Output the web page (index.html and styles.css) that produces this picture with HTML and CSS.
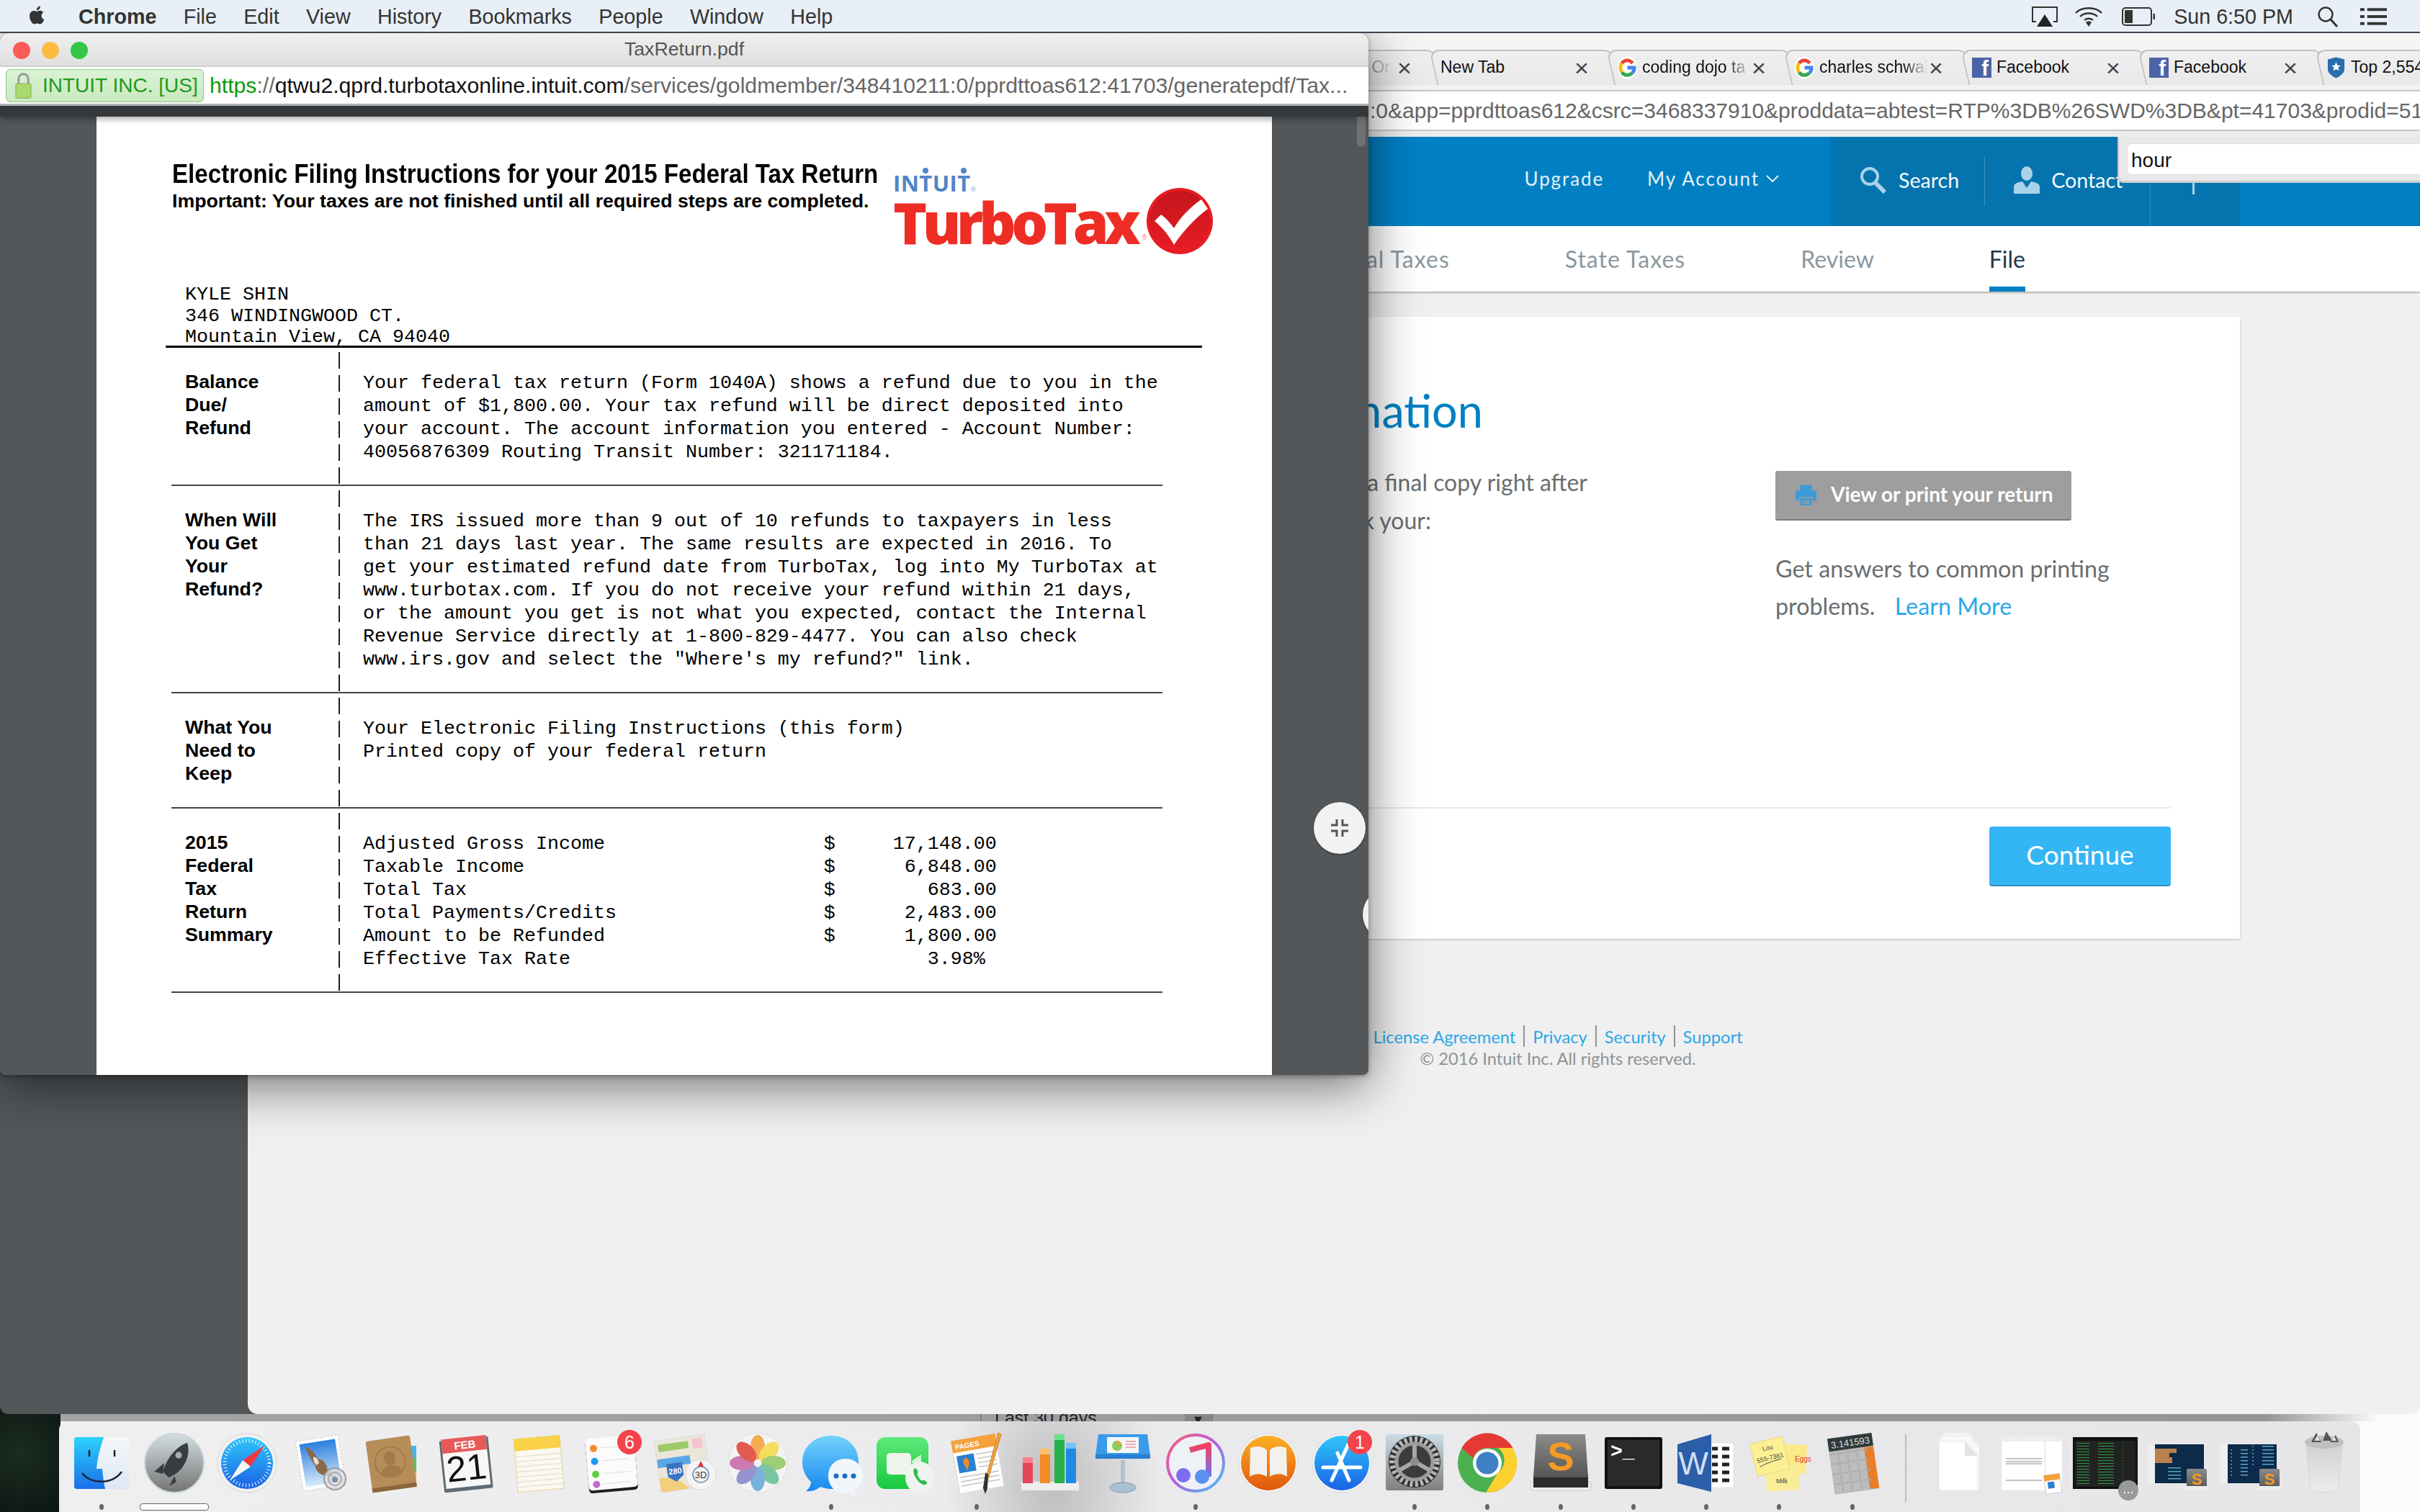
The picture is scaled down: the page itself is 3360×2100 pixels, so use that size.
FILE: index.html
```html
<!DOCTYPE html>
<html lang="en">
<head>
<meta charset="utf-8">
<title>TaxReturn.pdf</title>
<link rel="stylesheet" href="styles.css">
</head>
<body>
<svg class="defs" aria-hidden="true"><defs>
<linearGradient id="gBlue" x1="0" y1="0" x2="0" y2="1"><stop offset="0" stop-color="#2bd3fb"/><stop offset="1" stop-color="#1a6fe8"/></linearGradient>
<linearGradient id="gLight" x1="0" y1="0" x2="0" y2="1"><stop offset="0" stop-color="#f6f7fa"/><stop offset="1" stop-color="#dce8f4"/></linearGradient>
<linearGradient id="gGrey" x1="0" y1="0" x2="0" y2="1"><stop offset="0" stop-color="#d4dfe2"/><stop offset="1" stop-color="#747474"/></linearGradient>
<linearGradient id="gSky" x1="0" y1="0" x2="0" y2="1"><stop offset="0" stop-color="#2c7fe0"/><stop offset="1" stop-color="#d6eaf8"/></linearGradient>
<linearGradient id="gGreen" x1="0" y1="0" x2="0" y2="1"><stop offset="0" stop-color="#5fe87a"/><stop offset="1" stop-color="#17c93f"/></linearGradient>
<linearGradient id="gMsg" x1="0" y1="0" x2="0" y2="1"><stop offset="0" stop-color="#72d2fb"/><stop offset="1" stop-color="#1788f0"/></linearGradient>
<linearGradient id="gTunes" x1="0" y1="0" x2="1" y2="1"><stop offset="0" stop-color="#fb5c74"/><stop offset=".5" stop-color="#b65ee0"/><stop offset="1" stop-color="#3dc8f5"/></linearGradient>
<linearGradient id="gNote" x1="0" y1="0" x2="0" y2="1"><stop offset="0" stop-color="#f6405f"/><stop offset="1" stop-color="#6f77f2"/></linearGradient>
<linearGradient id="gBooks" x1="0" y1="0" x2="0" y2="1"><stop offset="0" stop-color="#fdb022"/><stop offset="1" stop-color="#e0560f"/></linearGradient>
<linearGradient id="gApp" x1="0" y1="0" x2="0" y2="1"><stop offset="0" stop-color="#2fc6fa"/><stop offset="1" stop-color="#1a62e6"/></linearGradient>
<linearGradient id="gSys" x1="0" y1="0" x2="0" y2="1"><stop offset="0" stop-color="#c9dde4"/><stop offset="1" stop-color="#7f7f7f"/></linearGradient>
<linearGradient id="gSub" x1="0" y1="0" x2="0" y2="1"><stop offset="0" stop-color="#8b8b8b"/><stop offset="1" stop-color="#565656"/></linearGradient>
<linearGradient id="gRed" x1="0" y1="0" x2="0" y2="1"><stop offset="0" stop-color="#c4161c"/><stop offset="1" stop-color="#e81c24"/></linearGradient>
<linearGradient id="gTrash" x1="0" y1="0" x2="0" y2="1"><stop offset="0" stop-color="#cfcfcf"/><stop offset="1" stop-color="#ececec"/></linearGradient>
<pattern id="pCode" width="34" height="4" patternUnits="userSpaceOnUse"><rect width="22" height="1" fill="#2e9c40"/></pattern>
<pattern id="pCode2" width="30" height="5" patternUnits="userSpaceOnUse"><rect width="18" height="1.5" fill="#5aa7c7"/></pattern>
<pattern id="pKeys" width="13" height="14" patternUnits="userSpaceOnUse"><rect x=".6" y=".6" width="11.8" height="12.8" rx="1" fill="#bdbdbd" stroke="#9c9c9c" stroke-width=".5"/></pattern>
<pattern id="pKeysO" width="13" height="14" patternUnits="userSpaceOnUse"><rect x=".6" y=".6" width="11.8" height="12.8" rx="1" fill="#ee7d22" stroke="#c9651a" stroke-width=".5"/></pattern>
</defs></svg>

<div class="wallpaper"></div>

<div class="backpane">
  <div class="backband"><div class="select"><span class="select-label">Last 30 days</span><span class="select-arrow">▼</span></div></div>
</div>

<header class="menubar">
  <svg class="apple" viewBox="0 0 24 30"><path d="M17.6 15.7c0-3 2.4-4.4 2.6-4.5-1.400-2.100-3.600-2.400-4.400-2.400-1.900-.2-3.600 1.100-4.600 1.100-1 0-2.400-1.100-4-1C5.100 8.900 3.200 10.100 2.100 12c-2.200 3.800-.6 9.400 1.500 12.500 1.100 1.500 2.300 3.200 4 3.100 1.600-.1 2.200-1 4.100-1 1.900 0 2.500 1 4.100 1 1.700 0 2.800-1.500 3.800-3 1.200-1.700 1.700-3.400 1.700-3.500-.1 0-3.700-1.400-3.700-5.400zM14.500 6.500c.9-1 1.500-2.500 1.300-3.900-1.300.1-2.800.9-3.700 1.900-.8.9-1.500 2.400-1.300 3.800 1.400.1 2.800-.7 3.700-1.800z" fill="#333"/></svg>
  <nav class="menu-items">
    <span class="menu-app">Chrome</span><span>File</span><span>Edit</span><span>View</span><span>History</span><span>Bookmarks</span><span>People</span><span>Window</span><span>Help</span>
  </nav>
  <div class="status">
    <svg class="st-air" viewBox="0 0 38 30"><path d="M7 22H2V2h34v20h-5" fill="none" stroke="#333" stroke-width="2"/><path d="M19 12l11 17H8z" fill="#222"/></svg>
    <svg class="st-wifi" viewBox="0 0 42 30"><g fill="none" stroke="#333" stroke-width="2.400"><path d="M3 10C12 1 30 1 39 10"/><path d="M9 15c6-6 18-6 24 0"/><path d="M15 20c3-3 9-3 12 0"/></g><path d="M21 29l-4-6c2-2 6-2 8 0z" fill="#333"/></svg>
    <svg class="st-batt" viewBox="0 0 47 30"><rect x="1" y="3" width="40" height="24" rx="4" fill="none" stroke="#333" stroke-width="2"/><rect x="4" y="6" width="11" height="18" fill="#333"/><rect x="43.500" y="11" width="2.500" height="8" fill="#333"/></svg>
    <span class="clock">Sun 6:50 PM</span>
    <svg class="st-search" viewBox="0 0 30 30"><circle cx="12" cy="12" r="9.500" fill="none" stroke="#333" stroke-width="2.400"/><path d="M19 19l9 10" stroke="#333" stroke-width="3"/></svg>
    <svg class="st-list" viewBox="0 0 38 30"><g fill="#333"><rect x="0" y="3" width="6" height="4"/><rect x="10" y="3" width="28" height="4"/><rect x="0" y="13" width="6" height="4"/><rect x="10" y="13" width="28" height="4"/><rect x="0" y="23" width="6" height="4"/><rect x="10" y="23" width="28" height="4"/></g></svg>
  </div>
</header>

<div class="darkwin"></div>

<main class="browser">
  <div class="tabstrip">
    <div class="tab"><span class="tab-title fade tab-end">Or</span><span class="tab-x">×</span></div>
    <div class="tab"><span class="tab-title">New Tab</span><span class="tab-x">×</span></div>
    <div class="tab"><svg class="fav" viewBox="0 0 28 32"><ellipse cx="14" cy="16" rx="14" ry="16" fill="#fff"/><g fill="none" stroke-width="5"><path d="M21.500 9.500A10 11 0 0 0 6 9.500" stroke="#ea4335"/><path d="M6 9.500a10 11 0 0 0 0 13" stroke="#fbbc05"/><path d="M6 22.500a10 11 0 0 0 15 1" stroke="#34a853"/><path d="M14 16h10c0 3-1 6-3 7.500" stroke="#4285f4"/></g></svg><span class="tab-title fade">coding dojo ta</span><span class="tab-x">×</span></div>
    <div class="tab"><svg class="fav" viewBox="0 0 28 32"><ellipse cx="14" cy="16" rx="14" ry="16" fill="#fff"/><g fill="none" stroke-width="5"><path d="M21.500 9.500A10 11 0 0 0 6 9.500" stroke="#ea4335"/><path d="M6 9.500a10 11 0 0 0 0 13" stroke="#fbbc05"/><path d="M6 22.500a10 11 0 0 0 15 1" stroke="#34a853"/><path d="M14 16h10c0 3-1 6-3 7.500" stroke="#4285f4"/></g></svg><span class="tab-title fade">charles schwab</span><span class="tab-x">×</span></div>
    <div class="tab"><span class="fb">f</span><span class="tab-title">Facebook</span><span class="tab-x">×</span></div>
    <div class="tab"><span class="fb">f</span><span class="tab-title">Facebook</span><span class="tab-x">×</span></div>
    <div class="tab"><svg class="fav" viewBox="0 0 28 32"><path d="M14 1l12 3v14c0 6-6 10-12 13C8 28 2 24 2 18V4z" fill="#2a6db0"/><path d="M14 8l2 4.500 4.500.3-3.500 3 1.200 4.700L14 18l-4.200 2.500 1.200-4.700-3.500-3 4.500-.3z" fill="#fff"/></svg><span class="tab-title">Top 2,554 Compani</span></div>
  </div>
  <div class="addr"><span class="addr-text">:0&amp;app=pprdttoas612&amp;csrc=3468337910&amp;proddata=abtest=RTP%3DB%26SWD%3DB&amp;pt=41703&amp;prodid=51</span></div>
  <div class="page">
    <div class="findbar"><div class="findinput">hour</div></div>
    <div class="topbar">
      <span class="top-link top-up">Upgrade</span>
      <span class="top-link top-up">My Account<svg class="chev" viewBox="0 0 20 12"><path d="M2 2l8 8 8-8" fill="none" stroke="#dbeef8" stroke-width="2"/></svg></span>
      <div class="top-dark">
        <span class="top-tool"><svg class="ic-search" viewBox="0 0 38 38"><circle cx="14" cy="14" r="11" fill="none" stroke="#a9d3e8" stroke-width="4"/><path d="M22 23l13 13" stroke="#a9d3e8" stroke-width="6"/></svg>Search</span>
        <span class="top-tool top-contact"><svg class="ic-user" viewBox="0 0 36 38"><ellipse cx="18" cy="10" rx="8" ry="10" fill="#a9d3e8"/><path d="M0 38V28c0-4 6-6 12-7l6 9 6-9c6 1 12 3 12 7v10z" fill="#a9d3e8"/></svg>Contact</span>
        <span class="top-last"><i class="top-pin"></i></span>
      </div>
    </div>
    <nav class="subnav">
      <span class="sub-wide">Federal Taxes</span><span class="sub-wide">State Taxes</span><span>Review</span><span class="sub-on">File</span>
    </nav>
    <div class="content">
      <section class="card">
        <h1 class="card-title">Information</h1>
        <div class="card-cols">
          <div class="card-left">
            <p>Print a final copy right after</p>
            <p class="short">check your:</p>
          </div>
          <div class="card-right">
            <div class="print-btn"><svg class="ic-print" viewBox="0 0 32 32"><path d="M8 1h16v8H8z" fill="#3a9bd8"/><rect x="1" y="9" width="30" height="15" rx="3" fill="#3a9bd8"/><path d="M7 19h18v12H7z" fill="#3a9bd8" stroke="#9e9e9e" stroke-width="1.500"/><path d="M10 24h12M10 27h12" stroke="#9e9e9e" stroke-width="1.500"/></svg><span class="print-label">View or print your return</span></div>
            <p class="help">Get answers to common printing<br>problems. <a class="learn">Learn More</a></p>
          </div>
        </div>
        <div class="card-foot"><div class="continue">Continue</div></div>
      </section>
      <footer class="legal">
        <div class="legal-links"><a>License Agreement</a><a>Privacy</a><a>Security</a><a>Support</a></div>
        <div class="legal-copy">© 2016 Intuit Inc. All rights reserved.</div>
      </footer>
    </div>
  </div>
</main>

<section class="popup">
  <div class="pop-title">
    <span class="lights"><i class="l-r"></i><i class="l-y"></i><i class="l-g"></i></span>
    <span class="pop-name">TaxReturn.pdf</span>
  </div>
  <div class="pop-url">
    <span class="ev"><svg class="lock" viewBox="0 0 24 38"><path d="M5 17V9a7 7 0 0 1 14 0v8" fill="none" stroke="#999" stroke-width="3"/><rect x="1" y="16" width="22" height="21" rx="1.500" fill="#a9d86f" stroke="#7fa85a"/></svg>INTUIT INC. [US]</span>
    <span class="url"><b class="u-g">https</b><b class="u-s">://</b><b class="u-k">qtwu2.qprd.turbotaxonline.intuit.com</b><b class="u-s">/services/goldmember/348410211:0/pprdttoas612:41703/generatepdf/Tax...</b></span>
  </div>
  <div class="pop-strip"></div>
  <div class="viewer">
    <div class="thumb"></div>
    <button class="fab fab-main" aria-label="Exit full screen"><svg viewBox="0 0 28 28"><path d="M10 2v8H2M18 2v8h8M10 26v-8H2M18 26v-8h8" fill="none" stroke="#555" stroke-width="3"/></svg></button>
    <button class="fab fab-cut" aria-label="Zoom"></button>
    <article class="sheet">
      <div class="sheet-head">
        <div class="sheet-titles">
          <h2 class="doc-title">Electronic Filing Instructions for your 2015 Federal Tax Return</h2>
          <p class="doc-sub">Important: Your taxes are not finished until all required steps are completed.</p>
        </div>
        <div class="logo">
          <div class="intuit">IN<span class="dot">T</span>UI<span class="dot">T</span><sup>®</sup></div>
          <div class="tt-row">
            <span class="turbotax">TurboTax</span><span class="tt-r">®</span>
            <svg class="tt-check" viewBox="0 0 92 92"><circle cx="46" cy="46" r="46" fill="#e81c24"/><circle cx="46" cy="46" r="42" fill="url(#gRed)"/><path d="M11 46l9-9c7 5 13 12 18 19C46 42 59 28 76 16l9 13C68 42 52 58 38 79 31 66 22 55 11 46z" fill="#fff"/></svg>
          </div>
        </div>
      </div>
      <pre class="address">KYLE SHIN
346 WINDINGWOOD CT.
Mountain View, CA 94040</pre>
      <div class="rule-top"></div>
      <div class="drow">
        <div class="dlabel">Balance<br>Due/<br>Refund</div><i class="dbar"></i>
        <pre class="dtext">Your federal tax return (Form 1040A) shows a refund due to you in the
amount of $1,800.00. Your tax refund will be direct deposited into
your account. The account information you entered - Account Number:
40056876309 Routing Transit Number: 321171184.</pre>
      </div>
      <div class="drow">
        <div class="dlabel">When Will<br>You Get<br>Your<br>Refund?</div><i class="dbar"></i>
        <pre class="dtext">The IRS issued more than 9 out of 10 refunds to taxpayers in less
than 21 days last year. The same results are expected in 2016. To
get your estimated refund date from TurboTax, log into My TurboTax at
www.turbotax.com. If you do not receive your refund within 21 days,
or the amount you get is not what you expected, contact the Internal
Revenue Service directly at 1-800-829-4477. You can also check
www.irs.gov and select the "Where's my refund?" link.</pre>
      </div>
      <div class="drow">
        <div class="dlabel">What You<br>Need to<br>Keep</div><i class="dbar"></i>
        <pre class="dtext">Your Electronic Filing Instructions (this form)
Printed copy of your federal return</pre>
      </div>
      <div class="drow">
        <div class="dlabel">2015<br>Federal<br>Tax<br>Return<br>Summary</div><i class="dbar"></i>
        <pre class="dtext">Adjusted Gross Income                   $     17,148.00
Taxable Income                          $      6,848.00
Total Tax                               $        683.00
Total Payments/Credits                  $      2,483.00
Amount to be Refunded                   $      1,800.00
Effective Tax Rate                               3.98%</pre>
      </div>
    </article>
  </div>
</section>

<footer class="dock">
  <div class="dk on"><svg viewBox="0 0 88 88"><rect x="6" y="8" width="76" height="72" rx="4" fill="url(#gLight)"/><path d="M10 8h37c-5 15-9 30-10 44h8c1 10 2 20 4 28H10a4 4 0 0 1-4-4V12a4 4 0 0 1 4-4z" fill="url(#gBlue)"/><path d="M27 26v9M62 26v9" stroke="#222" stroke-width="2.500"/><path d="M17 58c12 16 42 16 55-2" fill="none" stroke="#223" stroke-width="2.500"/></svg></div>
  <div class="dk bar"><svg viewBox="0 0 88 88"><circle cx="44" cy="44" r="41" fill="url(#gGrey)" stroke="#c9d5d8" stroke-width="2"/><path d="M62 16C48 20 34 36 28 56l8 8C56 58 68 34 62 16zM30 44L16 56l12 3zM44 62l-7 14 10-6z" fill="#3a3d40"/><circle cx="50" cy="33" r="4.500" fill="#a8aeb0"/></svg></div>
  <div class="dk"><svg viewBox="0 0 88 88"><circle cx="44" cy="44" r="41" fill="#f1f1f1" stroke="#d5d5d5"/><circle cx="44" cy="44" r="36" fill="url(#gApp)"/><circle cx="44" cy="44" r="31" fill="none" stroke="#fff" stroke-width="5" stroke-dasharray="1 3.500"/><path d="M68 20L38 40l11 9z" fill="#f0383c"/><path d="M20 68l18-28 11 9z" fill="#f6f6f6"/></svg></div>
  <div class="dk"><svg viewBox="0 0 88 88"><g transform="rotate(-9 44 44)"><rect x="14" y="9" width="60" height="70" fill="#fff" stroke="#ddd" stroke-width="2" stroke-dasharray="3 2"/><rect x="19" y="14" width="50" height="60" fill="url(#gSky)"/><path d="M26 18c7 3 12 10 16 20 7 1 10 8 10 16l10 14-14-6c-8-2-12-8-12-16-4-8-8-18-10-28z" fill="#8a6a4a"/><path d="M36 34c4 1 6 6 6 10l-4 2c-3-4-4-8-2-12z" fill="#e9dfd0"/></g><circle cx="64" cy="66" r="15" fill="rgba(220,220,225,.8)" stroke="#999" stroke-width="2"/><circle cx="64" cy="66" r="9" fill="none" stroke="#aaa" stroke-width="2"/><circle cx="64" cy="67" r="4" fill="#7f8fa5"/></svg></div>
  <div class="dk"><svg viewBox="0 0 88 88"><rect x="66" y="20" width="10" height="18" fill="#49b6e6"/><rect x="66" y="38" width="10" height="18" fill="#5fc15a"/><rect x="66" y="56" width="10" height="18" fill="#f2b632"/><g transform="rotate(-8 44 44)"><rect x="10" y="9" width="62" height="72" rx="3" fill="#b68d58"/><rect x="10" y="75" width="62" height="6" fill="#8a663a"/><circle cx="40" cy="42" r="21" fill="none" stroke="#a17a49" stroke-width="2"/><ellipse cx="40" cy="37" rx="8" ry="10" fill="#a17a49"/><path d="M25 58c2-9 9-11 15-11s13 2 15 11c-8 5-22 5-30 0z" fill="#a17a49"/></g></svg></div>
  <div class="dk"><svg viewBox="0 0 88 88"><g transform="rotate(-6 44 44)"><rect x="10" y="10" width="68" height="72" rx="2" fill="#5d6d75"/><rect x="13" y="10" width="62" height="67" fill="#f7f7f7"/><rect x="13" y="8" width="62" height="20" fill="#e85a5a"/><text x="30" y="24" class="cal-m">FEB</text><text x="44" y="68" class="cal-d">21</text></g></svg></div>
  <div class="dk"><svg viewBox="0 0 88 88"><g transform="rotate(-5 44 44)"><rect x="12" y="8" width="64" height="74" fill="#fbf9ef" stroke="#e2d39a"/><rect x="12" y="8" width="64" height="17" fill="#f9d24a"/><path d="M12 33h64M12 40h64M12 47h64M12 54h64M12 61h64M12 68h64M12 75h64" stroke="#dcdacb" stroke-width="1"/></g></svg></div>
  <div class="dk"><svg viewBox="0 0 88 88"><g transform="rotate(-5 40 46)"><rect x="9" y="10" width="68" height="74" rx="5" fill="#1d1d1d"/><rect x="9" y="8" width="68" height="72" rx="5" fill="#fbfbfb"/><circle cx="20" cy="22" r="5" fill="#f58a2a"/><circle cx="20" cy="40" r="5" fill="#1e9bf0"/><circle cx="20" cy="58" r="5" fill="#5ad23c"/><circle cx="20" cy="72" r="5" fill="#c46ad6"/><path d="M30 22h38M30 40h38M30 58h38M30 72h38" stroke="#e4e4e4" stroke-width="1.500"/></g><circle cx="68" cy="15" r="17" fill="#f4434a"/><text x="68" y="24" class="badge">6</text></svg></div>
  <div class="dk"><svg viewBox="0 0 88 88"><g transform="rotate(-8 44 44)"><rect x="6" y="8" width="70" height="72" fill="#ece6d8" stroke="#ddd"/><rect x="10" y="14" width="42" height="10" fill="#9cc96a"/><rect x="58" y="12" width="14" height="14" fill="#f4c6cf"/><path d="M6 34h46v12H6z" fill="#5aa7e6"/><path d="M6 80V60c20 0 30 8 40 20z" fill="#f3cf7c"/><path d="M18 42h22v18l-11 8-11-8z" fill="#3b73c4"/><text x="29" y="57" class="mapnum">280</text></g><circle cx="66" cy="60" r="21" fill="#f4f4f4" stroke="#ddd"/><circle cx="66" cy="60" r="11" fill="none" stroke="#6a8fb3" stroke-width="1.500"/><path d="M66 41l-4 8h8z" fill="#e33"/><text x="66" y="65" class="map3d">3D</text></svg></div>
  <div class="dk"><svg viewBox="0 0 88 88"><circle cx="44" cy="44" r="41" fill="#f4f4f4" stroke="#ddd"/><g opacity=".88"><ellipse cx="44" cy="22" rx="10" ry="17" fill="#f4a13c"/><ellipse cx="44" cy="22" rx="10" ry="17" fill="#f5d94a" transform="rotate(45 44 44)"/><ellipse cx="44" cy="22" rx="10" ry="17" fill="#8fc965" transform="rotate(90 44 44)"/><ellipse cx="44" cy="22" rx="10" ry="17" fill="#6cbf98" transform="rotate(135 44 44)"/><ellipse cx="44" cy="22" rx="10" ry="17" fill="#6aa9d8" transform="rotate(180 44 44)"/><ellipse cx="44" cy="22" rx="10" ry="17" fill="#8a86c8" transform="rotate(225 44 44)"/><ellipse cx="44" cy="22" rx="10" ry="17" fill="#c76aa8" transform="rotate(270 44 44)"/><ellipse cx="44" cy="22" rx="10" ry="17" fill="#e0463a" transform="rotate(315 44 44)"/></g></svg></div>
  <div class="dk on"><svg viewBox="0 0 88 88"><path d="M44 6c22 0 38 15 38 36S66 80 44 80c-5 0-10-1-15-3-5 4-12 7-20 6 4-3 7-8 7-13C8 63 4 53 4 42 4 21 22 6 44 6z" fill="url(#gMsg)"/><path d="M64 38c14 0 24 10 24 24 0 9-5 16-11 20 0 3 1 5 3 7-5 0-9-2-11-4-2 0-3 1-5 1-14 0-24-10-24-24s10-24 24-24z" fill="#f2f6fa"/><circle cx="51" cy="62" r="3.500" fill="#1c6fc4"/><circle cx="63" cy="62" r="3.500" fill="#1c6fc4"/><circle cx="75" cy="62" r="3.500" fill="#1c6fc4"/></svg></div>
  <div class="dk"><svg viewBox="0 0 88 88"><rect x="6" y="8" width="72" height="72" rx="12" fill="url(#gGreen)"/><rect x="20" y="30" width="34" height="30" rx="5" fill="#eef5ec"/><path d="M54 42l14-10v24z" fill="#d5f5d8"/><ellipse cx="66" cy="64" rx="20" ry="22" fill="#f0f4ee"/><path d="M58 52c2-2 4 0 5 3s-1 4 0 6 3 6 5 7 3-1 6 1 2 4 0 5c-6 3-20-14-16-22z" fill="#2dbb4a"/></svg></div>
  <div class="dk on"><svg viewBox="0 0 88 88"><g transform="rotate(-10 44 44)"><rect x="14" y="8" width="62" height="74" fill="#fdfdfd" stroke="#ddd"/><rect x="14" y="8" width="62" height="17" fill="#f5a23a"/><text x="18" y="21" class="pages">PAGES</text><rect x="18" y="30" width="24" height="24" fill="#2b7fd0"/><path d="M30 34c4 2 5 7 3 10l-3 8-3-8c-2-4-1-8 3-10z" fill="#f08a2a"/><path d="M46 32h26M46 38h26M46 44h26M46 50h26M18 60h54M18 66h54M18 72h54" stroke="#aaa" stroke-width="1"/></g><path d="M74 2l4 2-22 76-3-1z" fill="#f4a13c" stroke="#c97f20"/><path d="M56 58l-3 21 3 8 3-8 1-20z" fill="#333"/></svg></div>
  <div class="dk"><svg viewBox="0 0 88 88"><rect x="4" y="70" width="80" height="12" fill="#eee" stroke="#ddd"/><rect x="6" y="40" width="14" height="32" fill="#e5445a"/><rect x="6" y="36" width="14" height="8" fill="#f7838f"/><rect x="30" y="28" width="14" height="44" fill="#f28c28"/><rect x="30" y="24" width="14" height="8" fill="#f8c070"/><rect x="50" y="8" width="14" height="64" fill="#27b14a"/><rect x="50" y="4" width="14" height="8" fill="#6be08a"/><rect x="66" y="20" width="14" height="52" fill="#1f8ae6"/><rect x="66" y="16" width="14" height="8" fill="#74c1f5"/></svg></div>
  <div class="dk"><svg viewBox="0 0 88 88"><rect x="41" y="40" width="6" height="36" fill="#b4c2cc"/><ellipse cx="44" cy="78" rx="18" ry="7" fill="#a9c0d2" stroke="#7d98ad"/><path d="M10 4h68l4 30H6z" fill="#3a9bea"/><rect x="6" y="32" width="76" height="6" fill="#2a7fd0"/><rect x="22" y="8" width="44" height="22" fill="#f6f6f6"/><circle cx="36" cy="20" r="7" fill="#8dcb5a"/><path d="M36 20V13a7 7 0 0 1 6 4z" fill="#f5a13c"/><path d="M48 14h14M48 18h14M48 22h14" stroke="#d66" stroke-width="1.200"/></svg></div>
  <div class="dk on"><svg viewBox="0 0 88 88"><circle cx="44" cy="44" r="39" fill="#eef1f6" stroke="url(#gTunes)" stroke-width="4"/><path d="M36 26l26-7v44" fill="none" stroke="url(#gNote)" stroke-width="8" stroke-linejoin="round"/><path d="M36 24v36" stroke="url(#gNote)" stroke-width="6"/><ellipse cx="27" cy="61" rx="10" ry="10" fill="#7c6df0"/><ellipse cx="53" cy="63" rx="10" ry="10" fill="#5b8ff0"/></svg></div>
  <div class="dk"><svg viewBox="0 0 88 88"><circle cx="44" cy="44" r="41" fill="#f2f2f2" stroke="#ddd"/><circle cx="44" cy="44" r="38" fill="url(#gBooks)"/><path d="M42 26c-6-6-16-6-23-3l-1 40c8-6 18-4 24 0zM46 26c6-6 16-6 23-3l1 40c-8-6-18-4-24 0z" fill="#f3f1ee"/></svg></div>
  <div class="dk"><svg viewBox="0 0 88 88"><circle cx="44" cy="44" r="41" fill="#f2f2f2" stroke="#ddd"/><circle cx="44" cy="44" r="38" fill="url(#gApp)"/><path d="M53 18L30 68M38 30l16 38M18 50h52" stroke="#fff" stroke-width="5" stroke-linecap="round"/><circle cx="69" cy="15" r="17" fill="#f4434a"/><text x="69" y="24" class="badge">1</text></svg></div>
  <div class="dk on"><svg viewBox="0 0 88 88"><rect x="4" y="4" width="80" height="78" rx="3" fill="url(#gSys)"/><circle cx="44" cy="42" r="36" fill="#2f2f2f"/><circle cx="44" cy="42" r="31" fill="none" stroke="#b7b7b7" stroke-width="8" stroke-dasharray="4 3.300"/><circle cx="44" cy="42" r="25" fill="#3b3b3b" stroke="#9b9b9b" stroke-width="5"/><path d="M44 42V18M44 42L23 54M44 42l21 12" stroke="#a7a7a7" stroke-width="6"/><circle cx="44" cy="42" r="6" fill="#8e8e8e"/></svg></div>
  <div class="dk on"><svg viewBox="0 0 88 88"><circle cx="44" cy="44" r="41" fill="#4caf50"/><path d="M8.500 23A41 41 0 0 1 79.500 23H44a21 21 0 0 0-20 14z" fill="#e53935"/><path d="M79.500 23A41 41 0 0 1 42 85l17-28a21 21 0 0 0 0-34z" fill="#fcd02f"/><circle cx="44" cy="44" r="20" fill="#fff"/><circle cx="44" cy="44" r="15.500" fill="#3f7fc4"/></svg></div>
  <div class="dk on"><svg viewBox="0 0 88 88"><rect x="2" y="70" width="84" height="12" rx="2" fill="#ededed" stroke="#ccc"/><rect x="6" y="60" width="76" height="18" fill="#2b2b2b"/><path d="M10 4h68l4 60H6z" fill="url(#gSub)"/><text x="44" y="54" class="subl">S</text></svg></div>
  <div class="dk on"><svg viewBox="0 0 88 88"><rect x="4" y="8" width="80" height="72" rx="3" fill="#111"/><rect x="8" y="12" width="72" height="64" fill="#2a2a2a"/><text x="12" y="36" class="term">&gt;_</text></svg></div>
  <div class="dk on"><svg viewBox="0 0 88 88"><rect x="42" y="16" width="40" height="62" fill="#fff" stroke="#e2e2e2"/><path d="M52 24h24M52 35h24M52 46h24M52 57h24M52 68h24" stroke="#222" stroke-width="5" stroke-dasharray="8 6 10"/><path d="M4 18l47-14v80L4 72z" fill="#2b5ea8"/><text x="26" y="60" class="word">W</text></svg></div>
  <div class="dk on"><svg viewBox="0 0 88 88"><rect x="42" y="18" width="40" height="40" fill="#fbe98a" transform="rotate(3 60 38)"/><rect x="26" y="48" width="46" height="34" fill="#f9ee97" transform="rotate(-4 50 66)"/><g transform="rotate(-14 30 34)"><rect x="8" y="12" width="46" height="46" fill="#fdf094" stroke="#e8d97a"/><text x="31" y="26" class="st1">Lou</text><text x="31" y="40" class="st1">555-7361</text><path d="M14 46c10-3 20-4 32-4" stroke="#555" fill="none"/></g><text x="66" y="42" class="st2">Eggs</text><text x="48" y="72" class="st1">Milk</text></svg></div>
  <div class="dk on"><svg viewBox="0 0 88 88"><g transform="rotate(-8 44 44)"><rect x="14" y="6" width="62" height="78" fill="#b8b8b8"/><rect x="14" y="6" width="62" height="18" fill="#2f3a3a"/><text x="72" y="20" class="calc">3.141593</text><rect x="14" y="25" width="49" height="58" fill="url(#pKeys)"/><rect x="63" y="25" width="13" height="58" fill="url(#pKeysO)"/></g></svg></div>
  <i class="dock-sep"></i>
  <div class="dk"><svg viewBox="0 0 88 88"><g transform="translate(10 0)"><path d="M12 2h36l14 18v60H12z" fill="#f2f2f2"/><path d="M8 8h40l14 16v56H8z" fill="#f8f8f8"/><path d="M6 14h36l18 20v48H6z" fill="#fff" stroke="#e6e6e6"/><path d="M42 14v20h18z" fill="#e4e4e4"/></g></svg></div>
  <div class="dk"><svg viewBox="0 0 88 88"><rect x="2" y="8" width="84" height="74" fill="#fff" stroke="#eee"/><rect x="2" y="8" width="84" height="6" fill="#eee"/><path d="M8 38h50M8 42h50M8 45h50M8 68h50" stroke="#888" stroke-width="1"/><rect x="62" y="14" width="1" height="68" fill="#ddd"/><g transform="rotate(-8 72 72)"><rect x="62" y="60" width="22" height="26" fill="#fff" stroke="#ccc"/><rect x="62" y="60" width="22" height="8" fill="#f5a23a"/><rect x="66" y="70" width="9" height="9" fill="#2b7fd0"/></g></svg></div>
  <div class="dk more"><svg viewBox="0 0 88 88"><rect x="-1" y="8" width="90" height="72" fill="#111"/><rect x="2" y="13" width="84" height="64" fill="#222"/><rect x="5" y="16" width="64" height="58" fill="url(#pCode)"/><circle cx="76" cy="82" r="14" fill="#9a9a9a"/><path d="M70 84h2v2h-2zM75 84h2v2h-2zM80 84h2v2h-2z" fill="#fff"/></svg></div>
  <div class="dk"><svg viewBox="0 0 88 88"><rect x="2" y="18" width="78" height="54" fill="#eee"/><rect x="12" y="18" width="68" height="54" fill="#0c2a4a"/><path d="M12 24h30v6H12zM12 30h20v6H12zM12 36h24v8H12z" fill="#b9814e"/><rect x="20" y="50" width="30" height="20" fill="url(#pCode2)"/><rect x="56" y="52" width="28" height="28" rx="2" fill="url(#gSub)"/><rect x="54" y="76" width="32" height="6" fill="#eee"/><text x="70" y="74" class="subl-s">S</text></svg></div>
  <div class="dk"><svg viewBox="0 0 88 88"><rect x="2" y="18" width="78" height="54" fill="#eee"/><rect x="12" y="18" width="68" height="54" fill="#0c2a4a"/><rect x="16" y="24" width="24" height="40" fill="url(#pCode2)"/><rect x="46" y="20" width="30" height="30" fill="url(#pCode2)"/><rect x="56" y="52" width="28" height="28" rx="2" fill="url(#gSub)"/><rect x="54" y="76" width="32" height="6" fill="#eee"/><text x="70" y="74" class="subl-s">S</text></svg></div>
  <div class="dk"><svg viewBox="0 0 88 88"><g transform="translate(6 0)"><path d="M12 14l7 66c9 6 29 6 38 0l7-66z" fill="url(#gTrash)" stroke="#d6d6d6"/><ellipse cx="38" cy="15" rx="27" ry="9" fill="#c0c0c0"/><path d="M20 15l7-13 7 13zM36 13l5-13 8 13zM46 15l8-10 4 10z" fill="#555"/><path d="M24 13l5-8 3 8zM48 13l4-6 3 6z" fill="#e0e0e0"/></g></svg></div>
</footer>
</body>
</html>
```
FILE: styles.css
```css
* { box-sizing: border-box; }
html, body { margin: 0; padding: 0; }
body {
  position: relative;
  width: 3360px;
  height: 2100px;
  overflow: hidden;
  background: #fff;
  font-family: "Liberation Sans", Arial, sans-serif;
}
.defs { position: absolute; width: 0; height: 0; }
i { display: block; font-style: normal; }
p, h1, h2, pre { margin: 0; }

/* Desktop */
.wallpaper {
  position: absolute; left: 0; top: 1900px; width: 90px; height: 200px;
  background: radial-gradient(circle at 30% 60%, #1c2c22, #0b1712 70%);
}
.backpane {
  position: absolute; left: 84px; top: 1900px; width: 3276px; height: 200px;
  background: linear-gradient(90deg, #f4f4f4, #fbfbfb);
}
.backband {
  position: absolute; left: 0; top: 0; width: 3220px; height: 74px;
  background: linear-gradient(90deg, #a4a4a4 0, #949494 95%, rgba(150,150,150,0) 100%);
}
.select {
  position: absolute; left: 1277px; top: 40px; width: 323px; height: 34px;
  display: flex; align-items: center;
  border-left: 2px solid #808080; border-right: 2px solid #808080;
  font-size: 25px; color: #222;
}
.select-label { padding-left: 18px; flex: 1; padding-top: 24px; }
.select-arrow { width: 37px; height: 100%; background: #868686; font-size: 18px; text-align: center; line-height: 64px; }

/* Menu bar */
.menubar {
  position: absolute; left: 0; top: 0; width: 3360px; height: 46px;
  display: flex; align-items: center;
  padding: 2px 46px 0 40px;
  background: linear-gradient(90deg, #e8eff6, #e9eff6);
  border-bottom: 2px solid #3a4650;
  color: #333;
  font-size: 28.700px;
  z-index: 5;
}
.apple { width: 24px; height: 30px; margin-right: 45px; margin-top: -4px; }
.menu-items { display: flex; gap: 37.300px; }
.menu-app { font-weight: bold; }
.status { margin-left: auto; display: flex; align-items: center; }
.status svg { height: 30px; flex: none; }
.st-air { width: 38px; }
.st-wifi { width: 42px; margin-left: 21px; }
.st-batt { width: 47px; margin-left: 25px; }
.clock { margin: 0 33px 0 25px; }
.st-search { width: 30px; }
.st-list { width: 37px; margin-left: 30px; }

/* Dark window behind */
.darkwin {
  position: absolute; left: 0; top: 1400px; width: 500px; height: 564px;
  background: #53575a;
  border-radius: 0 0 12px 12px;
}

/* Main browser */
.browser {
  position: absolute; left: 344px; top: 46px; width: 3016px; height: 1918px;
  display: flex; flex-direction: column;
  background: #f0f0f0;
  border-radius: 0 0 14px 14px;
  overflow: hidden;
}
.tabstrip {
  flex: none; height: 81px;
  display: flex; padding: 23px 0 0 1390px;
  background: linear-gradient(#f6f6f6, #f2f2f2);
  border-bottom: 2px solid #c4c4c4;
}
.tab {
  position: relative; flex: none; width: 246px; height: 49px;
  display: flex; align-items: center;
  padding: 0 18px 0 20px;
  font-size: 23px; color: #111;
  white-space: nowrap;
}
.tab::before {
  content: ""; position: absolute; left: 4px; right: -14px; top: 0; bottom: 0;
  background: linear-gradient(#efefef, #e9e9e9);
  border: 2px solid #c2c2c2; border-bottom: 0;
  border-radius: 14px 14px 0 0;
  transform: skewX(13deg);
  transform-origin: 0 0;
}
.tab > * { position: relative; }
.tab-title { flex: 1; overflow: hidden; min-width: 0; }
.tab-title.fade { -webkit-mask-image: linear-gradient(90deg, #000 78%, transparent 100%); mask-image: linear-gradient(90deg, #000 78%, transparent 100%); }
.tab-end { text-align: right; padding-right: 8px; color: #777; }
.tab-x { flex: none; width: 24px; font-size: 34px; line-height: 1; color: #444; text-align: center; }
.fav { flex: none; width: 27px; height: 32px; margin-right: 7px; }
.fb {
  flex: none; width: 27px; height: 28px; margin-right: 7px;
  background: #4c64a6; color: #fff; font-weight: bold; font-size: 29px;
  line-height: 30px; text-align: right; padding-right: 4px; overflow: hidden;
}
.addr {
  flex: none; height: 63px;
  display: flex; align-items: center;
  padding: 0 0 9px 1558px;
  background: linear-gradient(#fff 0, #fff 84%, #c8c8c8 84%, #c8c8c8 87%, #ececec 87%);
  font-size: 30px; color: #666; white-space: nowrap;
  overflow: hidden;
}
.page { position: relative; flex: 1; display: flex; flex-direction: column; min-height: 0; }
.findbar {
  position: absolute; right: 0; top: 0; width: 420px; height: 64px; z-index: 2;
  padding: 9px 0 9px 11px;
  background: #e8e8e8; border-left: 2px solid #c9c9c9; border-bottom: 3px solid #cfcfcf;
  border-radius: 0 0 0 8px;
}
.findinput {
  height: 44px; padding-left: 5px;
  background: #fff; border: 1px solid #ddd; border-right: 0; border-radius: 6px 0 0 6px;
  font-size: 28px; line-height: 45px; color: #111;
}
.topbar {
  flex: none; height: 124px;
  display: flex; align-items: center; justify-content: flex-end;
  gap: 60px;
  background: #0080c3;
  font-family: Lato, sans-serif; color: #e4f2fa; font-size: 26px; letter-spacing: 1.900px;
  padding-right: 250px;
}
.top-link { display: flex; align-items: center; }
.top-up { position: relative; top: -4px; }
.chev { width: 20px; height: 12px; margin-left: 8px; }
.top-dark {
  height: 124px; width: 568px; margin-left: 11px;
  display: flex; align-items: center;
  background: #0574ae;
  font-size: 28.600px; letter-spacing: 0; color: #f3f9fc;
}
.top-tool { display: flex; align-items: center; height: 68px; padding: 0 0 4px 40px; flex: none; }
.ic-search { width: 38px; height: 38px; margin-right: 16px; }
.top-contact { padding-left: 40px; margin-left: 35px; border-left: 1px solid #3f93bf; width: 230px; }
.ic-user { width: 36px; height: 38px; margin-right: 16px; }
.top-last { align-self: stretch; flex: 1; border-left: 3px solid #0a80bd; display: flex; justify-content: center; margin-left: -1px; }
.top-pin { width: 3px; height: 17px; background: #a9d3e8; margin-top: 63px; margin-right: 6px; }
.subnav {
  flex: none; height: 91px;
  display: flex; justify-content: flex-end; gap: 160px;
  padding: 26px 548px 0 0;
  background: #fff;
  box-shadow: 0 2px 2px rgba(0,0,0,.25);
  font-family: Lato, sans-serif; font-size: 32px; color: #8c979e;
  position: relative;
}
.sub-wide { letter-spacing: 1px; }
.sub-on { color: #23384a; height: 65px; position: relative; border-bottom: 7px solid #0080c3; }
.content { flex: 1; padding: 35px 0 0 872px; }
.card {
  width: 1894px; height: 864px;
  display: flex; flex-direction: column;
  padding: 96px 96px 73px;
  background: #fff;
  box-shadow: 0 1px 2px rgba(0,0,0,.25);
  font-family: Lato, sans-serif; color: #6a6e71;
}
.card-title {
  font-size: 63px; line-height: 68px; font-weight: 400; color: #0080c3;
  text-align: right; width: 747px;
}
.card-cols { display: flex; margin-top: 39px; gap: 261px; }
.card-left { flex: none; width: 892px; font-size: 32px; line-height: 53px; text-align: right; }
.short { padding-right: 217px; }
.card-right { padding-top: 11px; flex: 1; }
.print-btn {
  width: 411px; height: 69px;
  display: flex; align-items: center; padding-left: 27px;
  background: #9e9e9e; color: #fff; border-radius: 3px;
  border-bottom: 2px solid #7c7c7c;
  font-size: 28px; font-weight: 700;
}
.print-label { position: relative; top: -2px; }
.ic-print { width: 31px; height: 32px; margin-right: 19px; }
.help { margin-top: 41px; font-size: 32.300px; line-height: 52px; width: 500px; white-space: nowrap; }
.learn { color: #2ba7e8; margin-left: 19px; }
.card-foot {
  margin-top: auto; padding-top: 25px;
  display: flex; justify-content: flex-end;
  border-top: 2px solid #e9e9e9;
}
.continue {
  width: 252px; height: 83px;
  display: flex; align-items: center; justify-content: center;
  padding-bottom: 4px;
  background: #35b6f4; color: #fff; border-radius: 4px;
  border-bottom: 2px solid #2a8fc2;
  font-size: 37px;
}
.legal { width: 1894px; margin-top: 120px; text-align: center; font-family: Lato, sans-serif; font-size: 23.700px; line-height: 32px; }
.legal-links { display: flex; justify-content: center; color: #2ba7e8; }
.legal-links a { padding: 0 11px; height: 30px; line-height: 32px; }
.legal-links a + a { border-left: 2px solid #8f9396; }
.legal-copy { color: #8f9396; }

/* PDF popup */
.popup {
  position: absolute; left: 0; top: 46px; width: 1900px; height: 1447px;
  display: flex; flex-direction: column;
  background: #53575a;
  border-radius: 12px 12px 8px 8px;
  box-shadow: 0 14px 70px rgba(0,0,0,.55), 0 2px 6px rgba(0,0,0,.3);
  overflow: hidden;
  z-index: 3;
}
.pop-title {
  position: relative; flex: none; height: 45px;
  display: flex; align-items: center; justify-content: center;
  background: linear-gradient(#efefef, #dfdfdf);
  font-size: 26.700px; color: #555;
}
.lights { position: absolute; left: 18px; top: 12px; display: flex; gap: 16px; }
.lights i { width: 24px; height: 24px; border-radius: 50%; }
.l-r { background: #fc5b57; }
.l-y { background: #fdbc40; }
.l-g { background: #33c748; }
.pop-url {
  flex: none; height: 56px;
  display: flex; align-items: center;
  padding: 0 8px;
  background: #fff;
  border-top: 2px solid #cfcfcf; border-bottom: 3px solid #b8b8b8;
  white-space: nowrap;
}
.ev {
  flex: none; width: 275px; height: 46px;
  display: flex; align-items: center;
  padding-left: 12px;
  background: linear-gradient(#dcf2d6, #c9e9bf);
  border: 1px solid #8fc58a; border-radius: 6px;
  color: #1e9a1e; font-size: 28px;
  white-space: nowrap; overflow: hidden;
}
.lock { width: 23px; height: 38px; margin-right: 15px; flex: none; }
.url { margin-left: 8px; font-size: 30.200px; }
.url b { font-weight: 400; }
.u-g { color: #0a9a0a; }
.u-s { color: #666; }
.u-k { color: #111; }
.pop-strip { flex: none; height: 15px; background: #35383b; box-shadow: 0 4px 8px rgba(0,0,0,.3); position: relative; z-index: 1; }
.viewer { position: relative; flex: 1; min-height: 0; padding-left: 134px; overflow: hidden; }
.thumb { position: absolute; right: 4px; top: -6px; width: 12px; height: 48px; border-radius: 6px; background: rgba(255,255,255,.16); z-index: 2; }
.fab {
  position: absolute; width: 72px; height: 72px; padding: 0;
  border: 0; border-radius: 50%;
  display: flex; align-items: center; justify-content: center;
  background: #f2f2f2;
  box-shadow: 0 1px 3px rgba(0,0,0,.4);
}
.fab svg { width: 28px; height: 28px; }
.fab-main { left: 1824px; top: 952px; }
.fab-cut { left: 1892px; top: 1072px; }

.sheet { width: 1632px; height: 100%; background: #fff; overflow: hidden; color: #000; }
.sheet-head { height: 231px; display: grid; grid-template-columns: 1106px 1fr; }
.sheet-titles { padding: 60px 0 0 105px; white-space: nowrap; }
.doc-title { font-size: 36px; line-height: 40px; font-weight: 700; transform: scaleX(.92); transform-origin: 0 0; }
.doc-sub { font-size: 26.700px; line-height: 34px; font-weight: 700; }
.logo { padding-top: 69px; }
.intuit { position: relative; font-family: "Open Sans", sans-serif; font-weight: 700; font-size: 31px; line-height: 31px; height: 31px; letter-spacing: .400px; color: #4f86c6; margin-top: 8px; }
.intuit sup { font-size: 9px; letter-spacing: 0; vertical-align: baseline; color: #9dbde0; }
.dot { position: relative; display: inline-block; }
.dot::before { content: ""; position: absolute; left: 50%; top: -6px; width: 8px; height: 8px; margin-left: -4px; border-radius: 50%; background: #4f86c6; }
.tt-row { position: relative; display: flex; align-items: flex-start; height: 92px; margin-top: -2px; }
.turbotax { font-family: "Open Sans", sans-serif; font-weight: 800; font-size: 80px; line-height: 80px; letter-spacing: -6.400px; color: #ee2d24; }
.tt-r { font-size: 10px; color: #f2867f; margin-top: 56px; margin-left: 8px; }
.tt-check { position: absolute; left: 352px; top: -7px; width: 92px; height: 92px; }
.address { padding: 2px 0 0 123px; font: 26.670px/29.500px "Liberation Mono", "Courier New", monospace; height: 87px; overflow: visible; }
.rule-top { width: 1439px; height: 3px; margin-left: 96px; background: #000; }
.drow {
  width: 1376px; margin-left: 104px;
  display: grid; grid-template-columns: 232px 2px 1fr;
  border-bottom: 2px solid #444;
  min-height: 32px;
}
.dlabel { padding: 31px 0 31px 19px; font-size: 26.700px; line-height: 32px; font-weight: 700; }
.dbar { margin-top: 6px; background: repeating-linear-gradient(to bottom, #2a1a10 0 23px, transparent 23px 32px); }
.dtext { padding: 33px 0 29px 32px; font: 26.670px/32px "Liberation Mono", "Courier New", monospace; }

/* Dock */
.dock {
  position: absolute; left: 82px; top: 1974px; width: 3195px; height: 126px;
  display: flex; padding: 14px 0 0 8px;
  background:
    radial-gradient(ellipse 150px 200px at 1380px 90px, rgba(160,158,160,.6), rgba(160,158,160,0)),
    linear-gradient(90deg, #efeff0, #e6e6e8);
  border-radius: 12px 12px 0 0;
  z-index: 4;
}
.dk { position: relative; flex: none; width: 101.300px; display: flex; flex-direction: column; align-items: center; }
.dk svg { width: 88px; height: 88px; overflow: visible; flex: none; }
.dk.on::after { content: ""; width: 6px; height: 8px; margin-top: 13px; border-radius: 50%; background: #666; }
.dk.bar::after { content: ""; width: 94px; height: 8px; margin-top: 12px; border-radius: 4px; background: #fff; border: 1px solid #666; box-sizing: content-box; }
.dock-sep { flex: none; width: 2px; height: 94px; margin: 4px 22px 0 23px; background: #bdbdbd; }
.cal-m { font: 700 15px "Liberation Sans", sans-serif; fill: #fff; }
.cal-d { font: 400 50px "Liberation Sans", sans-serif; fill: #111; text-anchor: middle; }
.badge { font: 400 25px "Liberation Sans", sans-serif; fill: #fff; text-anchor: middle; }
.mapnum { font: 700 11px "Liberation Sans", sans-serif; fill: #fff; text-anchor: middle; }
.map3d { font: 400 13px "Liberation Sans", sans-serif; fill: #333; text-anchor: middle; }
.pages { font: 700 10px "Liberation Sans", sans-serif; fill: #fff; }
.subl { font: 700 56px "Liberation Sans", sans-serif; fill: #f59a23; text-anchor: middle; }
.subl-s { font: 700 22px "Liberation Sans", sans-serif; fill: #f59a23; text-anchor: middle; }
.term { font: 700 28px "Liberation Mono", monospace; fill: #fff; }
.word { font: 400 44px "Liberation Sans", sans-serif; fill: #cfe0f5; text-anchor: middle; }
.st1 { font: 400 9px "Liberation Sans", sans-serif; fill: #444; text-anchor: middle; }
.st2 { font: 400 10px "Liberation Sans", sans-serif; fill: #e33; }
.calc { font: 400 13px "Liberation Sans", sans-serif; fill: #ddd; text-anchor: end; }
```
